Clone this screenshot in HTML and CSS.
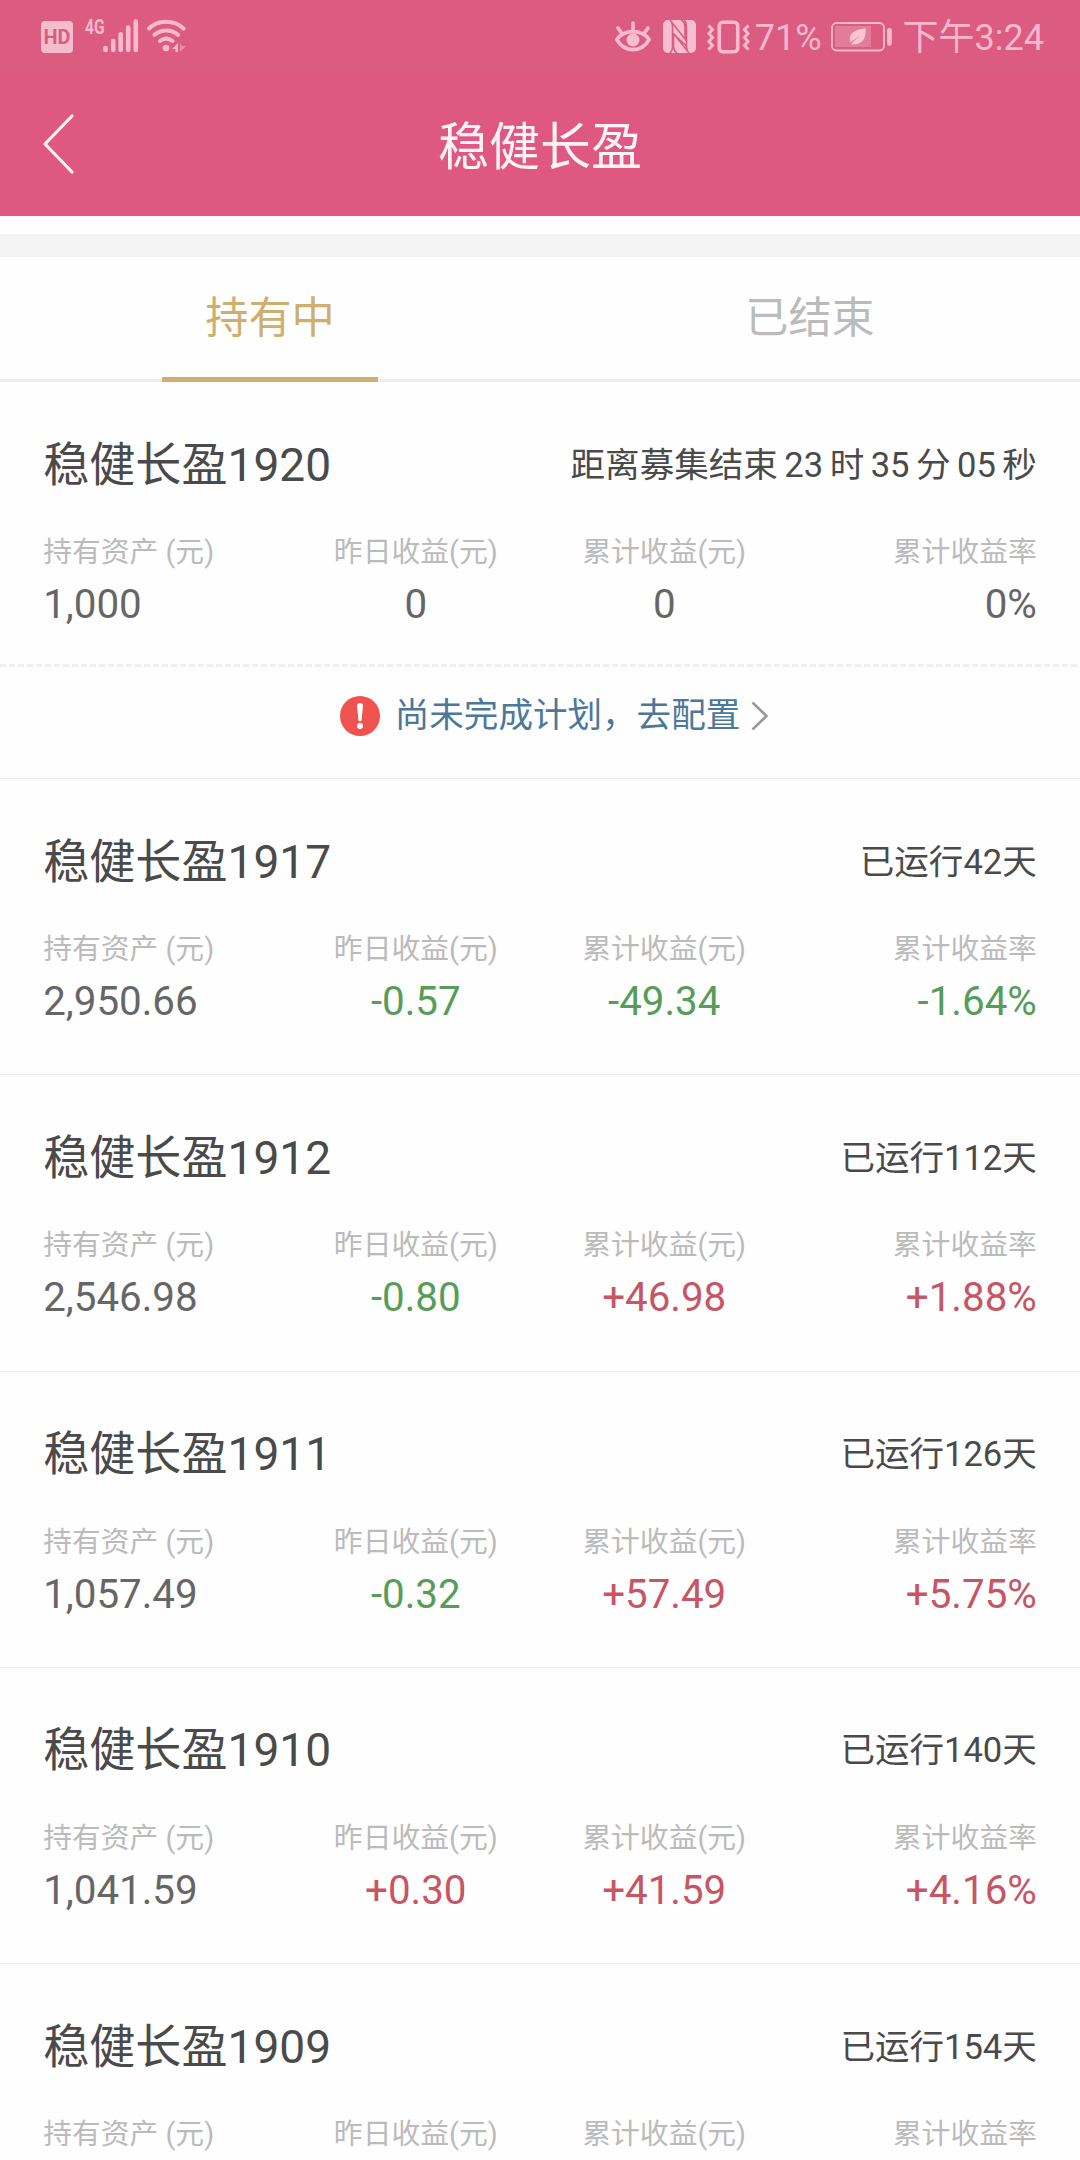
FILE: index.html
```html
<!DOCTYPE html>
<html lang="zh-CN">
<head>
    <meta charset="UTF-8">
    <meta name="viewport" content="width=device-width, initial-scale=1.0">
    <title>稳健长盈</title>
    <link rel="stylesheet" href="styles.css">
</head>
<body>
    <div class="status-bar">
        <div class="status-left">
            <svg class="icon-hd" width="32" height="32" viewBox="0 0 32 32">
                <rect x="0" y="0" width="32" height="32" rx="4" fill="#f3bdcd"/>
                <text x="16" y="23" text-anchor="middle" class="hd-text" textLength="27" lengthAdjust="spacingAndGlyphs">HD</text>
            </svg>
            <span class="net-type">4G</span>
            <svg class="icon-signal" width="36" height="34" viewBox="0 0 36 34" stroke="#fab9cf" stroke-width="4.6" stroke-linecap="round">
                <path d="M2.5 29v2M10.2 22v9M17.7 15.300v15.700M25.200 8.500v22.500M32.800 2.500v28.500"/>
            </svg>
            <svg class="icon-wifi" width="40" height="34" viewBox="0 0 40 34" fill="none" stroke="#fab9cf" stroke-width="4" stroke-linecap="round">
                <path d="M2 9.500C11 .500 27 .500 36.500 9.500M7.500 15.800c6.500-5.800 17-5.800 23.500 0M13 22c4-3 8.500-3 12.500 0"/>
                <circle cx="19" cy="29" r="3.300" fill="#fab9cf" stroke="none"/>
                <path d="M31 24v9h-2.500v-3H25z" fill="#fab9cf" stroke="none"/>
                <path d="M33 24l2 3h4l-6 6z" fill="#e88ba7" stroke="none"/>
            </svg>
        </div>
        <div class="status-right">
            <svg class="icon-eye" width="38" height="34" viewBox="0 0 38 34" fill="none" stroke="#fab9cf" stroke-width="3.600" stroke-linecap="round">
                <path d="M2.800 20.500C10.500 10 27.500 10 35.200 20.500C27.500 34 10.500 34 2.800 20.500z" stroke-linejoin="round"/>
                <circle cx="19" cy="21" r="6.500" fill="#f6bfd0" stroke="none"/>
                <path d="M19 4v7M4 9l4 5.500M34 9l-4 5.500"/>
            </svg>
            <svg class="icon-nfc" width="33" height="33" viewBox="0 0 33 33">
                <rect width="33" height="33" rx="5" fill="#f5bfd0"/>
                <path d="M7 0Q9.500 2 9.500 7V26Q9.500 31 7 33M7 0L22 19V7Q22 2 18 0M26 33Q23.500 31 23.500 26L10.500 14V26Q10.500 31 14 33M26 33L11 14M23.500 26V7Q23.500 2 21 0" fill="none" stroke="#db5c80" stroke-width="1.600"/>
            </svg>
            <svg class="icon-vibrate" width="43" height="34" viewBox="0 0 43 34" fill="none" stroke="#fab9cf" stroke-width="3.600">
                <rect x="12.300" y="2.300" width="18.400" height="29.400" rx="3.500"/>
                <path d="M1.500 5.500l4 4-3.500 4 3.500 4-3.500 4 3.500 4-4 4M41.500 5.500l-4 4 3.500 4-3.500 4 3.500 4-3.500 4 4 4" stroke-width="3"/>
            </svg>
            <span class="status-text">71%</span>
            <svg class="icon-battery" width="62" height="30" viewBox="0 0 62 30">
                <rect x="1" y="1" width="52" height="27.500" rx="4.500" fill="none" stroke="#f6b9cc" stroke-width="1.800"/>
                <rect x="4" y="4" width="36" height="21" fill="#e37c9a"/>
                <path d="M34.500 6C35.500 16 32 23 20.500 22.500C21.500 19 26 17.500 29 13C25 17.500 21.500 18 19.500 20.500C16.500 10 25 8.500 34.500 6z" fill="#f8c5d4"/>
                <rect x="56" y="6" width="4.800" height="18" rx="2.400" fill="#f8b9cd"/>
            </svg>
            <span class="status-text">下午3:24</span>
        </div>
    </div>

    <header class="header">
        <svg class="back" width="34" height="62" viewBox="0 0 34 62" fill="none" stroke="#fff3f8" stroke-width="3.200" stroke-linecap="round" stroke-linejoin="round">
            <path d="M30 3L3 31L30 59"/>
        </svg>
        <h1>稳健长盈</h1>
    </header>
    <div class="separator"></div>

    <nav class="tabs">
        <div class="tab active">持有中</div>
        <div class="tab">已结束</div>
    </nav>

    <main>
        <section class="item">
            <div class="item-head">
                <h2>稳健长盈1920</h2>
                <span class="countdown">距离募集结束 23 时 35 分 05 秒</span>
            </div>
            <div class="item-data">
                <div class="col"><label>持有资产 (元)</label><p>1,000</p></div>
                <div class="col"><label>昨日收益(元)</label><p>0</p></div>
                <div class="col"><label>累计收益(元)</label><p>0</p></div>
                <div class="col"><label>累计收益率</label><p>0%</p></div>
            </div>
            <div class="notice">
                <svg class="warn" width="40" height="40" viewBox="0 0 40 40">
                    <circle cx="20" cy="20" r="20" fill="#ef524f"/>
                    <path d="M17 9.500Q17 7 20 7T23 9.500L21.600 24Q21.400 25.500 20 25.500T18.400 24z" fill="#fff"/>
                    <circle cx="20" cy="30" r="3" fill="#fff"/>
                </svg>
                <span>尚未完成计划，去配置</span>
                <svg class="arrow" width="18" height="30" viewBox="0 0 18 30" fill="none" stroke="#999" stroke-width="2.600">
                    <path d="M1.500 1.500L15.500 15L1.500 28.500"/>
                </svg>
            </div>
        </section>

        <section class="item">
            <div class="item-head"><h2>稳健长盈1917</h2><span>已运行42天</span></div>
            <div class="item-data">
                <div class="col"><label>持有资产 (元)</label><p>2,950.66</p></div>
                <div class="col"><label>昨日收益(元)</label><p class="down">-0.57</p></div>
                <div class="col"><label>累计收益(元)</label><p class="down">-49.34</p></div>
                <div class="col"><label>累计收益率</label><p class="down">-1.64%</p></div>
            </div>
        </section>

        <section class="item">
            <div class="item-head"><h2>稳健长盈1912</h2><span>已运行112天</span></div>
            <div class="item-data">
                <div class="col"><label>持有资产 (元)</label><p>2,546.98</p></div>
                <div class="col"><label>昨日收益(元)</label><p class="down">-0.80</p></div>
                <div class="col"><label>累计收益(元)</label><p class="up">+46.98</p></div>
                <div class="col"><label>累计收益率</label><p class="up">+1.88%</p></div>
            </div>
        </section>

        <section class="item">
            <div class="item-head"><h2>稳健长盈1911</h2><span>已运行126天</span></div>
            <div class="item-data">
                <div class="col"><label>持有资产 (元)</label><p>1,057.49</p></div>
                <div class="col"><label>昨日收益(元)</label><p class="down">-0.32</p></div>
                <div class="col"><label>累计收益(元)</label><p class="up">+57.49</p></div>
                <div class="col"><label>累计收益率</label><p class="up">+5.75%</p></div>
            </div>
        </section>

        <section class="item">
            <div class="item-head"><h2>稳健长盈1910</h2><span>已运行140天</span></div>
            <div class="item-data">
                <div class="col"><label>持有资产 (元)</label><p>1,041.59</p></div>
                <div class="col"><label>昨日收益(元)</label><p class="up">+0.30</p></div>
                <div class="col"><label>累计收益(元)</label><p class="up">+41.59</p></div>
                <div class="col"><label>累计收益率</label><p class="up">+4.16%</p></div>
            </div>
        </section>

        <section class="item">
            <div class="item-head"><h2>稳健长盈1909</h2><span>已运行154天</span></div>
            <div class="item-data">
                <div class="col"><label>持有资产 (元)</label></div>
                <div class="col"><label>昨日收益(元)</label></div>
                <div class="col"><label>累计收益(元)</label></div>
                <div class="col"><label>累计收益率</label></div>
            </div>
        </section>
    </main>
</body>
</html>
```
FILE: styles.css
```css
html {
    font-size: 72px;
}
* {
    box-sizing: border-box;
    margin: 0;
    padding: 0;
}
body {
    width: 1080px;
    height: 2160px;
    overflow: hidden;
    background: #fefefe;
    color: #666;
    font-family: Roboto, "Noto Sans CJK SC", sans-serif;
    font-size: 0.48rem;
    font-weight: 400;
}
svg {
    display: block;
    flex: none;
}

/* status bar */
.status-bar {
    display: flex;
    justify-content: space-between;
    height: 72px;
    padding: 0 36px 0 41px;
    background: #db5c80;
    color: #f8b7cc;
}
.status-left, .status-right {
    display: flex;
    align-items: flex-start;
    padding-top: 19px;
}
.status-text {
    font-size: 36px;
    font-weight: 400;
    line-height: 38px;
}
.icon-hd {
    margin-top: 2px;
}
.hd-text {
    font-family: Roboto, sans-serif;
    font-size: 20px;
    font-weight: 700;
    fill: #db5c80;
}
.net-type {
    width: 18px;
    margin-left: 12px;
    font-size: 21px;
    font-weight: 700;
    line-height: 17px;
    transform: scaleX(0.74);
    transform-origin: left;
}
.icon-wifi {
    margin-left: 8px;
}
.icon-nfc {
    margin: 1px 0 0 11px;
}
.icon-vibrate {
    margin: 1px 5px 0 11px;
}
.icon-battery {
    margin: 3px 10px 0 9px;
}

/* title */
.header {
    display: grid;
    grid-template-columns: 200px 1fr 200px;
    align-items: center;
    height: 144px;
    background: #df5881;
    color: #fff3f8;
}
.header h1 {
    padding-top: 7px;
    font-size: 51px;
    font-weight: 400;
    line-height: 70px;
    text-align: center;
}
.back {
    margin-left: 42px;
}
.separator {
    height: 23px;
    margin-top: 18px;
    background: #f4f4f4;
}

/* tabs */
.tabs {
    display: grid;
    grid-template-columns: 1fr 1fr;
    height: 125px;
    border-bottom: 3px solid #eee;
}
.tab {
    display: flex;
    flex-direction: column;
    align-items: center;
    justify-content: space-between;
    height: 125px;
    padding-top: 30px;
    color: #bbb;
    font-size: 0.6rem;
    line-height: 64px;
}
.tab.active {
    color: #ceaf6d;
}
.tab.active::after {
    content: "";
    width: 40%;
    height: 5px;
    background: #ceaf6d;
}

/* list */
.item {
    height: 296.3px;
    padding-top: 52.5px;
    border-bottom: 1px solid #ececec;
}
.item:first-child {
    height: 397px;
}
.item-head {
    display: flex;
    align-items: center;
    justify-content: space-between;
    height: 60px;
    padding: 0 0.6rem;
    color: #4a4a4a;
    line-height: 60px;
}
.item-head h2 {
    font-size: 0.64rem;
    font-weight: 400;
}
.countdown {
    word-spacing: -2.1px;
}
.item-data {
    display: grid;
    grid-template-columns: repeat(4, 1fr);
    height: 139px;
    margin-top: 37.5px;
    padding: 0 0.6rem;
    text-align: center;
}
.item-data label {
    display: block;
    color: #bbb;
    font-size: 0.4rem;
    line-height: 40px;
}
.item-data p {
    margin-top: 3px;
    font-size: 0.56rem;
    line-height: 60px;
}
.col:first-child {
    text-align: left;
}
.col:last-child {
    text-align: right;
}
.item-data .up {
    color: #c85564;
}
.item-data .down {
    color: #559d58;
}

.item:first-child .item-data {
    height: 132px;
}
.notice {
    display: flex;
    align-items: center;
    justify-content: center;
    height: 101px;
    padding-left: 29px;
    /* dashed line on top, 6px dash and 3px gap */
    background: repeating-linear-gradient(to right, #f0f0f0 0 6px, transparent 6px 9px) top / 100% 3px no-repeat;
    color: #4c7899;
    line-height: 50px;
}
.warn {
    margin: 2px 15px 0 0;
}
.arrow {
    margin: 2px 0 0 11px;
}
```
